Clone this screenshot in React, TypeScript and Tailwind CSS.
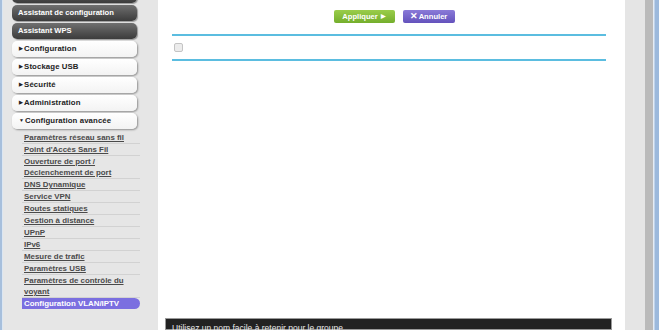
import React from 'react';

const links: string[][] = [
  ['Paramètres réseau sans fil'],
  ["Point d'Accès Sans Fil"],
  ['Ouverture de port /', 'Déclenchement de port'],
  ['DNS Dynamique'],
  ['Service VPN'],
  ['Routes statiques'],
  ['Gestion à distance'],
  ['UPnP'],
  ['IPv6'],
  ['Mesure de trafic'],
  ['Paramètres USB'],
  ['Paramètres de contrôle du', 'voyant'],
];

function DarkBtn({ label }: { label: string }) {
  return (
    <div className="h-[16px] w-[125px] rounded-[5px] bg-gradient-to-b from-[#707070] to-[#3c3c3c] shadow-[1px_1px_1px_#9a9a9a] pl-[6px] text-[7.6px] font-bold leading-[16px] text-white">
      {label}
    </div>
  );
}

function LightBtn({ label, open }: { label: string; open?: boolean }) {
  return (
    <div className="flex h-[16px] w-[125px] items-center rounded-[5px] bg-gradient-to-b from-white to-[#f3f3f3] shadow-[1px_1px_2px_#8f8f8f] pl-[7px] text-[7.8px] font-bold tracking-[0.1px] text-[#222]">
      <span className="mr-[1px] text-[5px]">{open ? '▼' : '▶'}</span>
      {label}
    </div>
  );
}

export default function App() {
  return (
    <div className="flex h-[330px] w-[660px] overflow-hidden bg-white font-['Liberation_Sans',Arial,sans-serif]">
      <div className="w-[2px] shrink-0 bg-[#a7bfdc]" />
      <div className="w-[1px] shrink-0 bg-[#dbe6f2]" />
      {/* sidebar */}
      <div className="flex w-[155px] shrink-0 flex-col gap-[2px] bg-[#e6e6e6] pl-[9px] pt-0">
        <div className="-mt-[13px]">
          <DarkBtn label="" />
        </div>
        <DarkBtn label="Assistant de configuration" />
        <DarkBtn label="Assistant WPS" />
        <LightBtn label="Configuration" />
        <LightBtn label="Stockage USB" />
        <LightBtn label="Sécurité" />
        <LightBtn label="Administration" />
        <LightBtn label="Configuration avancée" open />
        <div className="mt-[1px] ml-[10px] flex w-[118px] flex-col">
          {links.map((l, i) => (
            <div key={i} className="border-b border-[#d2d2d2] pl-[2px] text-[7.9px] font-bold leading-[11px] text-[#4a4a4a]">
              {l.map((t, j) => (
                <div key={j}>
                  <span className="underline">{t}</span>
                </div>
              ))}
            </div>
          ))}
          <div className="h-[11px] rounded-r-full bg-[#7b6fe0] pl-[2px] text-[7.9px] font-bold leading-[11px] text-white">
            Configuration VLAN/IPTV
          </div>
        </div>
      </div>
      {/* content */}
      <div className="relative flex w-[467px] shrink-0 flex-col bg-white">
        <div className="mt-[10px] flex justify-center gap-[8px] pl-[5px]">
          <div className="flex h-[13px] w-[61px] items-center justify-center rounded-[2px] bg-gradient-to-b from-[#9acd4a] to-[#74ae2c] text-[7.6px] font-bold text-white">
            Appliquer <span className="ml-[3px] text-[6px]">▶</span>
          </div>
          <div className="flex h-[13px] w-[52px] items-center justify-center rounded-[2px] bg-gradient-to-b from-[#8a7ad8] to-[#6452bc] text-[7.6px] font-bold text-white">
            <span className="mr-[1px] text-[9px] leading-none">✕</span>Annuler
          </div>
        </div>
        <div className="ml-[14px] mt-[11px] w-[434px] border-y-2 border-[#5bbde0] py-[7px] pl-[2px]">
          <div className="h-[9px] w-[9px] rounded-[2px] border border-[#c4c4c4] bg-[#ececec]" />
        </div>
        <div className="flex-1" />
        <div className="ml-[7px] h-[12px] w-[447px] border border-[#9a9a9a] bg-[#222] pl-[6px] text-[8.5px] leading-[19px] text-[#e8e8e8]">
          Utilisez un nom facile à retenir pour le groupe.
        </div>
      </div>
      <div className="w-[20px] shrink-0 bg-[#e5e5e5]" />
      <div className="w-[8px] shrink-0 bg-[#bababa]" />
      <div className="w-[1px] shrink-0 bg-[#e4ecf5]" />
      <div className="w-[1px] shrink-0 bg-[#c0d3ea]" />
      <div className="w-[4px] shrink-0 bg-[#9cb9dc]" />
    </div>
  );
}
